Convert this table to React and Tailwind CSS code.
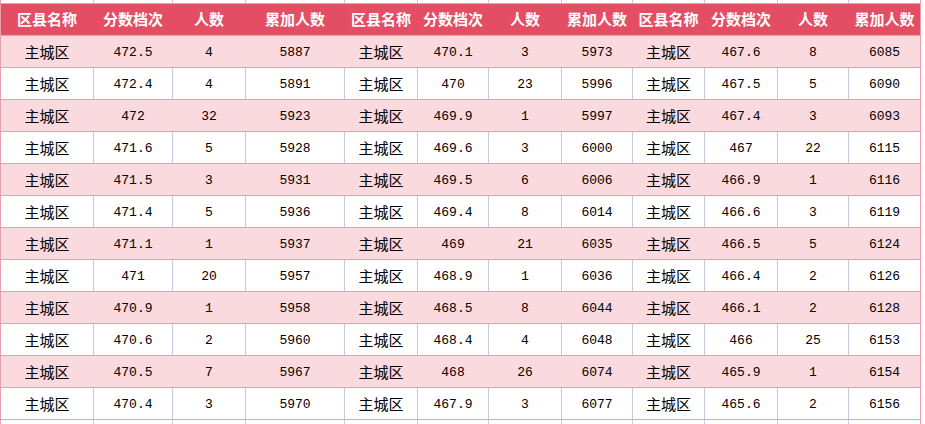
import React from "react";

const widths = [
  "w-[93px]", "w-[79px]", "w-[73px]", "w-[99px]",
  "w-[73px]", "w-[71px]", "w-[73px]", "w-[71px]",
  "w-[72px]", "w-[73px]", "w-[71px]", "w-[72px]",
];

const headers = ["区县名称", "分数档次", "人数", "累加人数"];

const groups = [
  [
    ["472.5", 4, 5887], ["472.4", 4, 5891], ["472", 32, 5923], ["471.6", 5, 5928],
    ["471.5", 3, 5931], ["471.4", 5, 5936], ["471.1", 1, 5937], ["471", 20, 5957],
    ["470.9", 1, 5958], ["470.6", 2, 5960], ["470.5", 7, 5967], ["470.4", 3, 5970],
  ],
  [
    ["470.1", 3, 5973], ["470", 23, 5996], ["469.9", 1, 5997], ["469.6", 3, 6000],
    ["469.5", 6, 6006], ["469.4", 8, 6014], ["469", 21, 6035], ["468.9", 1, 6036],
    ["468.5", 8, 6044], ["468.4", 4, 6048], ["468", 26, 6074], ["467.9", 3, 6077],
  ],
  [
    ["467.6", 8, 6085], ["467.5", 5, 6090], ["467.4", 3, 6093], ["467", 22, 6115],
    ["466.9", 1, 6116], ["466.6", 3, 6119], ["466.5", 5, 6124], ["466.4", 2, 6126],
    ["466.1", 2, 6128], ["466", 25, 6153], ["465.9", 1, 6154], ["465.6", 2, 6156],
  ],
];

const cjk = "font-['Noto_Sans_CJK_SC',sans-serif]";
const mono = "font-['Liberation_Mono','DejaVu_Sans_Mono',monospace]";

// blank strip with grid lines (cut-off rows above/below)
const Strip = ({ h, bottom }) => (
  <div className={`flex ${h} ${bottom ? "" : "border-b border-[#e8a0aa]"}`}>
    {widths.map((w, i) => (
      <div
        key={i}
        className={`${w} shrink-0 border-r ${i === 11 ? "border-[#e8a0aa]" : "border-[#c5c9de]"}`}
      />
    ))}
  </div>
);

export default function App() {
  const rows = groups[0].map((_, r) => groups.flatMap((g) => ["主城区", ...g[r]]));

  return (
    <div className="w-[925px] h-[424px] overflow-hidden bg-white">
      <div className="w-[921px] border-l border-[#e8a0aa]">
        <Strip h="h-[4px]" />

        {/* header */}
        <div className="flex h-[32px] bg-[#e34e64] border-b border-[#e8a0aa]">
          {widths.map((w, i) => (
            <div
              key={i}
              className={`${w} shrink-0 flex items-center justify-center whitespace-nowrap text-white font-bold text-[15px] ${cjk} border-r ${i === 11 ? "border-[#e8a0aa]" : "border-[#e34e64]"}`}
            >
              {headers[i % 4]}
            </div>
          ))}
        </div>

        {rows.map((row, r) => {
          const pink = r % 2 === 0;
          return (
            <div
              key={r}
              className={`flex h-[32px] border-b border-[#e8a0aa] ${pink ? "bg-[#fadadf]" : "bg-white"}`}
            >
              {row.map((v, i) => (
                <div
                  key={i}
                  className={`${widths[i]} shrink-0 flex items-center justify-center pt-[2px] text-black border-r ${
                    i === 11 ? "border-[#e8a0aa]" : pink ? "border-[#fadadf]" : "border-[#c5c9de]"
                  } ${i % 4 === 0 ? `${cjk} text-[15px]` : `${mono} text-[13px]`}`}
                >
                  {v}
                </div>
              ))}
            </div>
          );
        })}

        <Strip h="h-[5px]" bottom />
      </div>
    </div>
  );
}
